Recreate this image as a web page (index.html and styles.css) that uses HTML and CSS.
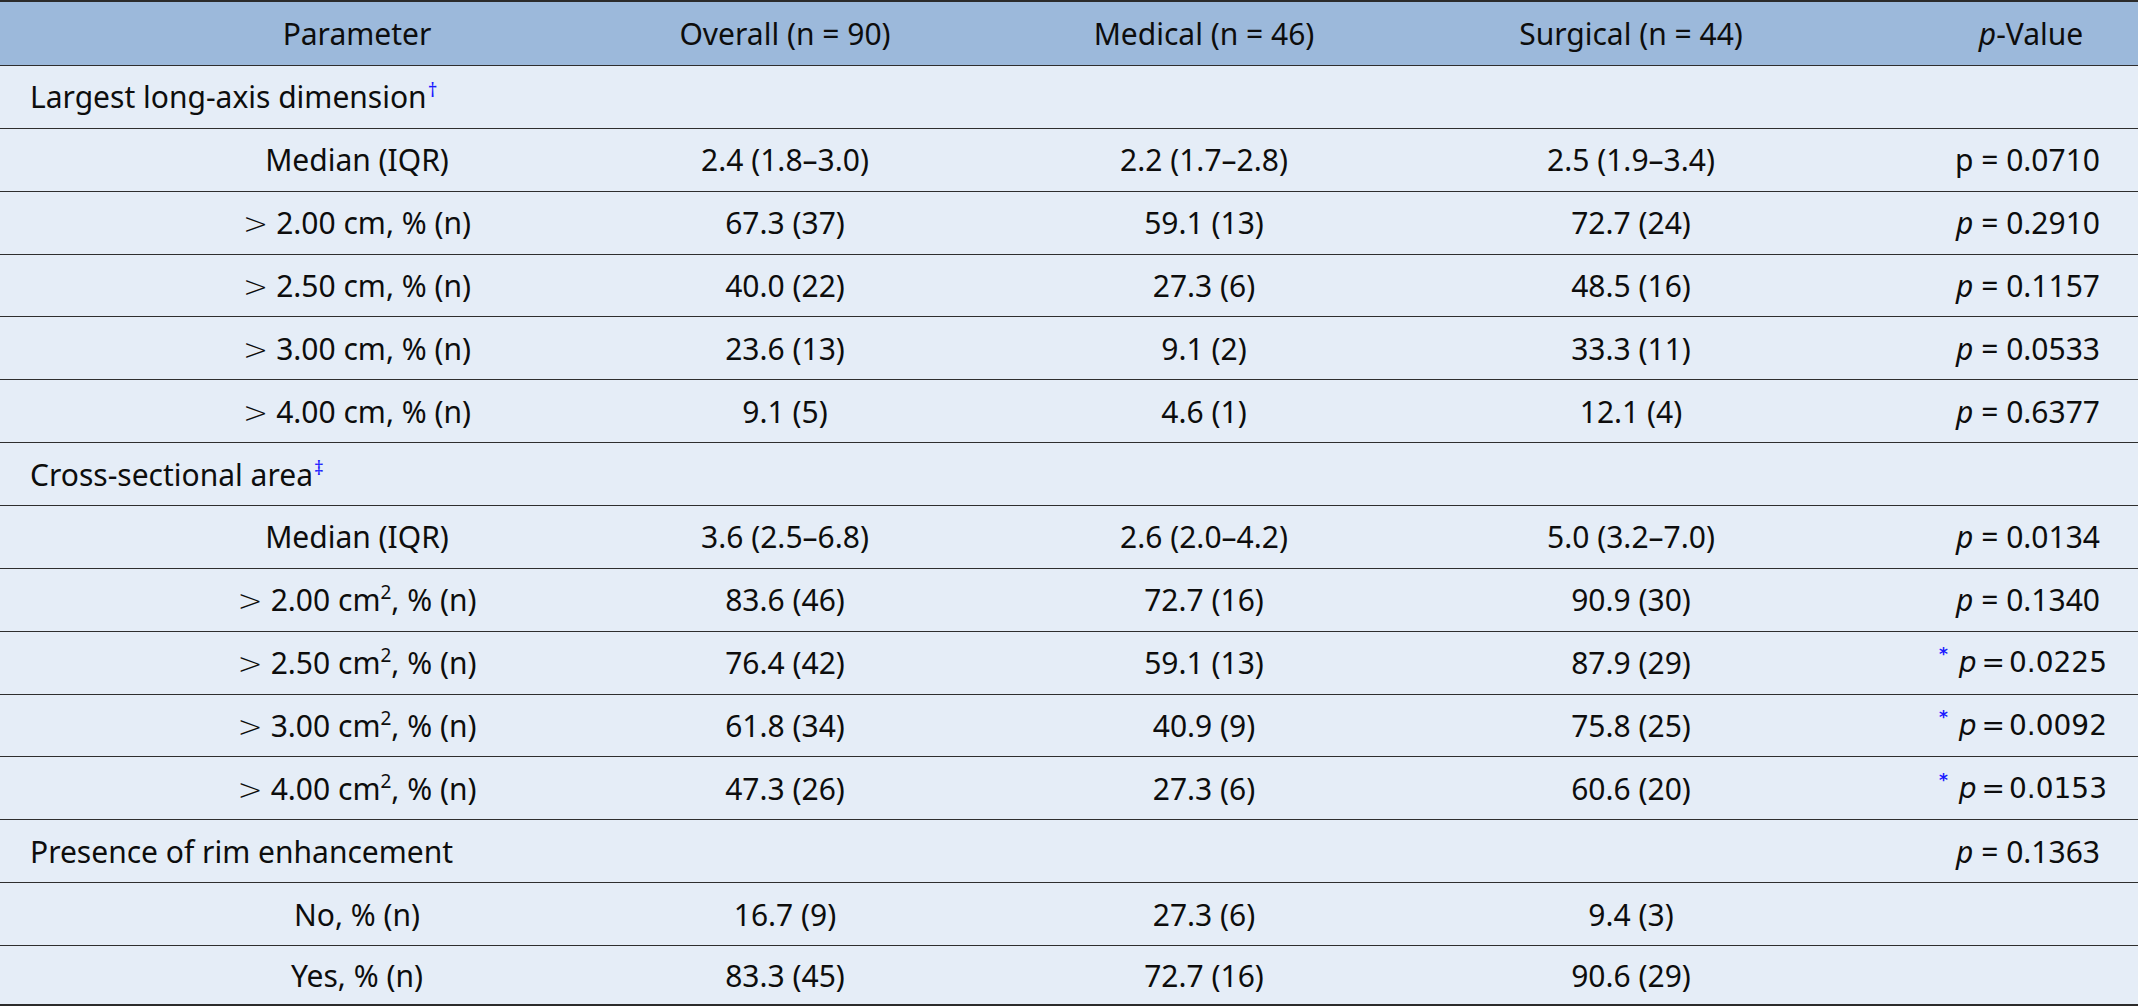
FILE: index.html
```html
<!DOCTYPE html>
<html lang="en">
<head>
<meta charset="utf-8">
<title>Table</title>
<link rel="stylesheet" href="styles.css">
</head>
<body>
<div class="table">
  <div class="row head">
    <div class="c1">Parameter</div>
    <div class="c">Overall (n = 90)</div>
    <div class="c">Medical (n = 46)</div>
    <div class="c">Surgical (n = 44)</div>
    <div class="c5h"><i>p</i>-Value</div>
  </div>

  <div class="row">
    <div class="sect">Largest long-axis dimension<sup class="fn">†</sup></div>
    <div class="pv"></div>
  </div>
  <div class="row">
    <div class="c1">Median (IQR)</div>
    <div class="c">2.4 (1.8–3.0)</div>
    <div class="c">2.2 (1.7–2.8)</div>
    <div class="c">2.5 (1.9–3.4)</div>
    <div class="pv">p = 0.0710</div>
  </div>
  <div class="row">
    <div class="c1"><span class="gt">&gt;</span>2.00 cm, % (n)</div>
    <div class="c">67.3 (37)</div>
    <div class="c">59.1 (13)</div>
    <div class="c">72.7 (24)</div>
    <div class="pv"><i>p</i> = 0.2910</div>
  </div>
  <div class="row">
    <div class="c1"><span class="gt">&gt;</span>2.50 cm, % (n)</div>
    <div class="c">40.0 (22)</div>
    <div class="c">27.3 (6)</div>
    <div class="c">48.5 (16)</div>
    <div class="pv"><i>p</i> = 0.1157</div>
  </div>
  <div class="row">
    <div class="c1"><span class="gt">&gt;</span>3.00 cm, % (n)</div>
    <div class="c">23.6 (13)</div>
    <div class="c">9.1 (2)</div>
    <div class="c">33.3 (11)</div>
    <div class="pv"><i>p</i> = 0.0533</div>
  </div>
  <div class="row">
    <div class="c1"><span class="gt">&gt;</span>4.00 cm, % (n)</div>
    <div class="c">9.1 (5)</div>
    <div class="c">4.6 (1)</div>
    <div class="c">12.1 (4)</div>
    <div class="pv"><i>p</i> = 0.6377</div>
  </div>

  <div class="row">
    <div class="sect">Cross-sectional area<sup class="fn">‡</sup></div>
    <div class="pv"></div>
  </div>
  <div class="row">
    <div class="c1">Median (IQR)</div>
    <div class="c">3.6 (2.5–6.8)</div>
    <div class="c">2.6 (2.0–4.2)</div>
    <div class="c">5.0 (3.2–7.0)</div>
    <div class="pv"><i>p</i> = 0.0134</div>
  </div>
  <div class="row">
    <div class="c1"><span class="gt">&gt;</span>2.00 cm<sup class="sq">2</sup>, % (n)</div>
    <div class="c">83.6 (46)</div>
    <div class="c">72.7 (16)</div>
    <div class="c">90.9 (30)</div>
    <div class="pv"><i>p</i> = 0.1340</div>
  </div>
  <div class="row">
    <div class="c1"><span class="gt">&gt;</span>2.50 cm<sup class="sq">2</sup>, % (n)</div>
    <div class="c">76.4 (42)</div>
    <div class="c">59.1 (13)</div>
    <div class="c">87.9 (29)</div>
    <div class="pv math"><sup class="ast">*</sup><i>p</i><span class="eq">=</span>0.0225</div>
  </div>
  <div class="row">
    <div class="c1"><span class="gt">&gt;</span>3.00 cm<sup class="sq">2</sup>, % (n)</div>
    <div class="c">61.8 (34)</div>
    <div class="c">40.9 (9)</div>
    <div class="c">75.8 (25)</div>
    <div class="pv math"><sup class="ast">*</sup><i>p</i><span class="eq">=</span>0.0092</div>
  </div>
  <div class="row">
    <div class="c1"><span class="gt">&gt;</span>4.00 cm<sup class="sq">2</sup>, % (n)</div>
    <div class="c">47.3 (26)</div>
    <div class="c">27.3 (6)</div>
    <div class="c">60.6 (20)</div>
    <div class="pv math"><sup class="ast">*</sup><i>p</i><span class="eq">=</span>0.0153</div>
  </div>

  <div class="row">
    <div class="sect">Presence of rim enhancement</div>
    <div class="pv"><i>p</i> = 0.1363</div>
  </div>
  <div class="row">
    <div class="c1">No, % (n)</div>
    <div class="c">16.7 (9)</div>
    <div class="c">27.3 (6)</div>
    <div class="c">9.4 (3)</div>
    <div class="pv"></div>
  </div>
  <div class="row last">
    <div class="c1">Yes, % (n)</div>
    <div class="c">83.3 (45)</div>
    <div class="c">72.7 (16)</div>
    <div class="c">90.6 (29)</div>
    <div class="pv"></div>
  </div>
</div>
</body>
</html>
```

FILE: styles.css
```css
html, body {
  margin: 0;
  padding: 0;
  background: #e5edf7;
}

body {
  font-family: "Noto Sans", "Liberation Sans", sans-serif;
  font-stretch: semi-condensed;
  font-size: 30px;
  color: #0d0d0d;
  overflow: hidden;
}

.table {
  width: 2138px;
  border-top: 2px solid #2b2b2b;
  background: #e5edf7;
}

.row {
  display: grid;
  grid-template-columns: 571px 428px 410px 444px 285px;
  align-items: center;
  height: 61.86px;
  border-bottom: 1px solid #2e2e2e;
  white-space: nowrap;
}

.row.head {
  height: 63px;
  background: #9cb9db;
}

.row.last {
  height: 58px;
  border-bottom: 2px solid #2b2b2b;
}

.c1 {
  padding-left: 143px;
  text-align: center;
}

.c {
  text-align: center;
}

.c5h {
  padding-left: 71px;
  text-align: center;
}

.sect {
  grid-column: 1 / 5;
  padding-left: 30px;
  text-align: left;
}

.pv {
  grid-column: 5;
  text-align: right;
  padding-right: 38px;
}

.pv.math {
  font-family: "DejaVu Sans", sans-serif;
  font-stretch: normal;
  font-size: 28px;
  padding-right: 31px;
}

.eq {
  display: inline-block;
  margin: 0 4px 0 5px;
}

.fn {
  color: #1a1aff;
  font-size: 19px;
  vertical-align: 11px;
  line-height: 0;
  margin-left: 1px;
}

.ast {
  color: #1a1aff;
  font-size: 17px;
  font-weight: bold;
  vertical-align: 12px;
  line-height: 0;
  margin-right: 11px;
}

.sq {
  font-size: 19px;
  vertical-align: 12px;
  line-height: 0;
}

.gt {
  font-family: "DejaVu Sans", sans-serif;
  font-stretch: normal;
  font-weight: 300;
  margin-right: 8px;
}
```
